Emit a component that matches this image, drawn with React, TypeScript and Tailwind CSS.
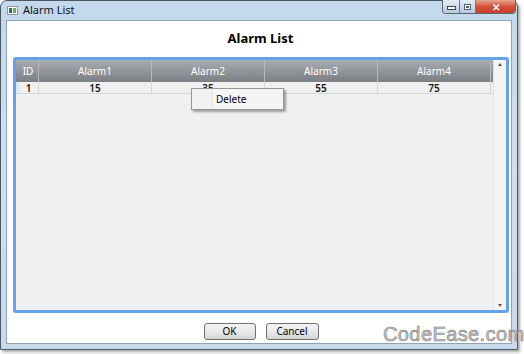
import React from "react";

const cols = ["Alarm1", "Alarm2", "Alarm3", "Alarm4"];
const vals = ["15", "35", "55", "75"];

export default function App() {
  return (
    <div className="relative w-[524px] h-[354px] bg-white font-['Noto_Sans',sans-serif] overflow-hidden">
      <div className="w-[518px] h-[350px] rounded-t-[7px] border border-[#4d5866] bg-gradient-to-b from-[#c3d8ec] via-[#cfe0f0] to-[#c7d9ea] flex flex-col shadow-[2px_2px_3px_rgba(0,0,0,0.35)]">
        {/* title bar */}
        <div className="h-[19px] flex items-start shrink-0">
          <div className="mt-[5px] ml-[6px] w-[11px] h-[9px] border border-[#8a9aaa] bg-white flex p-[1px] gap-[1px]">
            <div className="w-[4px] h-full bg-[#2f6f78]" />
            <div className="w-[3px] h-full bg-[#5fb35a]" />
          </div>
          <div className="ml-[5px] mt-[2px] text-[11px] leading-[14px] text-[#111]">Alarm List</div>
          <div className="flex-1" />
          <div className="flex h-[14px] mr-[1px] -mt-[1px] rounded-b-[4px] border border-[#5a6572] border-t-0 overflow-hidden">
            <div className="w-[17px] h-full bg-gradient-to-b from-[#e4edf6] to-[#b7c9dc] border-r border-[#6c7988] flex items-center justify-center">
              <div className="w-[7px] h-[2px] mt-[3px] bg-white border border-[#3c4756] box-content" />
            </div>
            <div className="w-[16px] h-full bg-gradient-to-b from-[#e4edf6] to-[#b7c9dc] border-r border-[#6c7988] flex items-center justify-center">
              <div className="w-[7px] h-[6px] border border-[#556070] bg-white flex items-center justify-center">
                <div className="w-[3px] h-[2px] border border-[#556070]" />
              </div>
            </div>
            <div className="w-[39px] h-full bg-gradient-to-b from-[#e8a393] via-[#d2503b] to-[#c7402a] flex items-center justify-center">
              <span className="text-white text-[10px] font-bold leading-none">✕</span>
            </div>
          </div>
        </div>

        {/* client area */}
        <div className="flex-1 mx-[5px] mb-[5px] bg-white border border-[#8ea3b9] flex flex-col">
          <div className="pt-[8px] h-[26px] pl-[3px] text-center text-[13px] leading-[18px] font-bold text-black shrink-0">
            Alarm List
          </div>

          <div className="mt-[10px] ml-[6px] mr-[2px] flex-1 rounded-[3px] border-[3px] border-[#64a2ee] bg-[#f0f0f0] flex overflow-hidden">
            <div className="flex-1 flex flex-col">
              {/* header */}
              <div className="h-[22px] flex bg-gradient-to-b from-[#a9adb1] to-[#7b7f83] text-white text-[10px]">
                <div className="w-[23px] pl-[2px] flex items-center justify-center border-r border-[#b7bbbf]">ID</div>
                {cols.map((c) => (
                  <div key={c} className="w-[113px] flex items-center justify-center border-r border-[#b7bbbf]">
                    {c}
                  </div>
                ))}
              </div>
              {/* data row */}
              <div className="h-[12px] flex text-[10px] leading-[12px] text-[#1a1a1a] font-semibold border-b border-[#d6d6d6]">
                <div className="w-[3px] bg-[#dbe7f2]" />
                <div className="w-[20px] flex items-center justify-center border-r border-[#d6d6d6]">1</div>
                {vals.map((v, i) => (
                  <div key={i} className="w-[113px] flex items-center justify-center border-r border-[#d6d6d6]">
                    {v}
                  </div>
                ))}
              </div>
            </div>
            {/* scrollbar */}
            <div className="w-[13px] bg-[#f4f4f4] border-l border-[#e2e2e2] flex flex-col justify-between items-center py-[3px]">
              <div className="w-0 h-0 border-l-[2px] border-r-[2px] border-b-[3px] border-l-transparent border-r-transparent border-b-[#555]" />
              <div className="w-0 h-0 border-l-[2px] border-r-[2px] border-t-[3px] border-l-transparent border-r-transparent border-t-[#555]" />
            </div>
          </div>

          <div className="mt-[10px] mb-[3px] h-[17px] flex justify-center gap-[10px] pl-[4px] shrink-0">
            <div className="w-[52px] h-[17px] rounded-[3px] border border-[#707070] bg-gradient-to-b from-[#f3f3f3] via-[#e9e9e9] to-[#d6d6d6] text-[10px] leading-[15px] text-center text-black">
              OK
            </div>
            <div className="w-[53px] h-[17px] rounded-[3px] border border-[#707070] bg-gradient-to-b from-[#f3f3f3] via-[#e9e9e9] to-[#d6d6d6] text-[10px] leading-[15px] text-center text-black">
              Cancel
            </div>
          </div>
        </div>
      </div>

      {/* context menu */}
      <div className="absolute left-[191px] top-[88px] w-[93px] h-[22px] bg-[#f5f5f5] border border-[#979797] shadow-[2px_2px_2px_rgba(0,0,0,0.35)] flex">
        <div className="w-[21px] h-full bg-[#f1f1f1] border-r border-[#e2e3e3]" />
        <div className="pl-[3px] text-[10px] leading-[20px] text-black">Delete</div>
      </div>

      {/* watermark */}
      <div className="absolute left-[383px] top-[322px] text-[20px] leading-[24px] font-['Liberation_Sans',sans-serif] text-[#c8c8c8] [-webkit-text-stroke:0.6px_#7d7d7d] tracking-[0.4px]">
        CodeEase.com
      </div>
    </div>
  );
}
